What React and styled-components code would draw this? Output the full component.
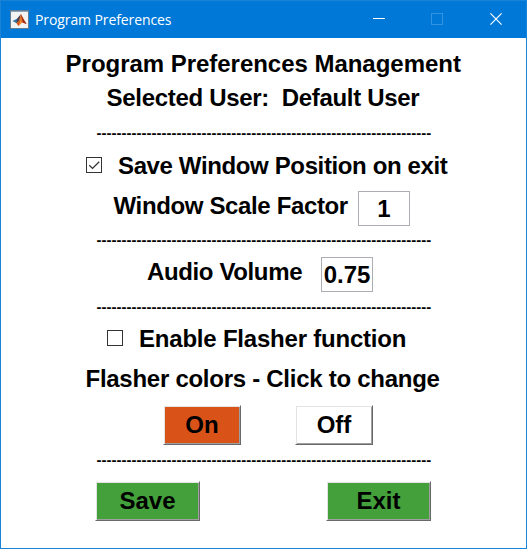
import React, { useState } from "react";
import styled, { createGlobalStyle } from "styled-components";

const GlobalStyle = createGlobalStyle`
  * { box-sizing: border-box; }
  body { margin: 0; background: #fff; overflow: hidden; }
`;

const Window = styled.div`
  width: 527px;
  height: 549px;
  display: flex;
  flex-direction: column;
  border: 1px solid #1883d7;
  background: #fff;
  color: #000;
  font: bold 24px/27px "Liberation Sans", Arial, sans-serif;
`;

const TitleBar = styled.header`
  flex: none;
  height: 37px;
  display: flex;
  align-items: center;
  padding-left: 9px;
  background: #0078d7;
  color: #fff;
`;

const Title = styled.h1`
  flex: 1;
  margin: 0 0 0 6px;
  font: 400 14px/20px "Open Sans", "Noto Sans", sans-serif;
  letter-spacing: -0.1px;
  white-space: nowrap;
`;

const WindowControl = styled.button`
  width: ${(p) => p.$width ?? 58}px;
  height: 36px;
  align-self: flex-start;
  padding: 0;
  border: 0;
  display: flex;
  align-items: center;
  justify-content: center;
  background: transparent;
`;

const Content = styled.main`
  flex: 1;
  display: flex;
  flex-direction: column;
  align-items: flex-start;
`;

const Row = styled.div`
  height: ${(p) => p.$height ?? 27}px;
  margin-top: ${(p) => p.$gap}px;
  padding-left: ${(p) => p.$indent}px;
  display: flex;
  align-items: flex-start;
`;

const Label = styled.span`
  white-space: pre;
  letter-spacing: ${(p) => p.$spacing ?? 0}px;
`;

const FieldLabel = styled(Label)`
  width: ${(p) => p.$width}px;
  padding-top: 1px;
`;

const Separator = styled.div`
  height: 17px;
  margin: ${(p) => p.$gap}px 0 0 95.5px;
  font-size: 15px;
  line-height: 17px;
  white-space: nowrap;
`;

const CheckBox = styled.button`
  width: 16px;
  height: 16px;
  margin: 5px 16px 0 0;
  padding: 0;
  border: 1px solid #333;
  display: flex;
  background: #fff;
`;

const Field = styled.input`
  width: 52px;
  height: 35px;
  padding: 1px 0 0;
  border: 1px solid #abadb3;
  border-radius: 0;
  outline: 0;
  background: #fff;
  color: #000;
  font: inherit;
  text-align: center;
`;

const PushButton = styled.button`
  width: ${(p) => p.$width}px;
  height: 40px;
  margin-right: ${(p) => p.$after ?? 0}px;
  padding: 0 0 1px;
  border: 1px solid;
  border-color: #fff #696969 #696969 #fff;
  box-shadow: inset 1px 1px #e3e3e3, inset -1px -1px #a0a0a0;
  background: ${(p) => p.$color};
  color: #000;
  font: inherit;
`;

const MatlabIcon = () => (
  <svg width="19" height="19" viewBox="0 0 19 19">
    <rect x=".5" y=".5" width="18" height="18" fill="#f3f3f3" stroke="#607d94" />
    <path d="M1 1.5h17" stroke="#8fa5b6" />
    <path d="M2.5 11 7 8.7 9 10.5 6.5 13.2Z" fill="#3877a5" />
    <path d="M7 8.7 11 4l-1.6 6.2-2.9 3Z" fill="#493e4d" />
    <path d="M11 4 9.2 10.5l-2.7 2.7 2 2.8 3.5-3.5 4.5 1.5Q14 10 11 4Z" fill="#d65418" />
    <path d="M11 4.5 10.4 11l-1.7 4.5 3-3Z" fill="#f2a039" />
    <path d="M11 4.5Q13 9 16.5 14L13 12.4Z" fill="#9e2b19" />
  </svg>
);

const Divider = ({ gap }) => <Separator $gap={gap}>{"-".repeat(67)}</Separator>;

const Check = ({ checked, onChange, label }) => (
  <CheckBox role="checkbox" aria-checked={checked} aria-label={label} onClick={() => onChange(!checked)}>
    {checked && (
      <svg width="14" height="14" viewBox="0 0 14 14" fill="none" stroke="#333" strokeWidth="1.3">
        <path d="M2.3 7.2 5.5 10.4 12.2 3.7" />
      </svg>
    )}
  </CheckBox>
);

export default function App() {
  const [savePosition, setSavePosition] = useState(true);
  const [flasher, setFlasher] = useState(false);

  return (
    <>
      <GlobalStyle />
      <Window>
        <TitleBar>
          <MatlabIcon />
          <Title>Program Preferences</Title>
          <WindowControl aria-label="Minimize">
            <svg width="12" height="12"><path d="M0 5.5h12" stroke="#fff" /></svg>
          </WindowControl>
          <WindowControl aria-label="Maximize">
            <svg width="12" height="12"><rect x=".5" y=".5" width="11" height="11" fill="none" stroke="#3393df" /></svg>
          </WindowControl>
          <WindowControl aria-label="Close" $width={60}>
            <svg width="12" height="12"><path d="m.4.4 11.2 11.2M11.6.4.4 11.6" stroke="#fff" strokeWidth="1.2" /></svg>
          </WindowControl>
        </TitleBar>
        <Content>
          <Row $gap={12} $indent={64.6}><Label $spacing={-0.03}>Program Preferences Management</Label></Row>
          <Row $gap={7} $indent={105.6}><Label $spacing={-0.31}>Selected User:  Default User</Label></Row>
          <Divider gap={13} />
          <Row $gap={11} $indent={85}>
            <Check checked={savePosition} onChange={setSavePosition} label="Save window position" />
            <Label $spacing={-0.37}>Save Window Position on exit</Label>
          </Row>
          <Row $gap={12} $height={35} $indent={112.5}>
            <FieldLabel $width={244.5} $spacing={-0.36}>Window Scale Factor</FieldLabel>
            <Field defaultValue="1" aria-label="Window scale factor" />
          </Row>
          <Divider gap={5} />
          <Row $gap={9} $height={35} $indent={146}>
            <FieldLabel $width={174} $spacing={-0.37}>Audio Volume</FieldLabel>
            <Field defaultValue="0.75" aria-label="Audio volume" />
          </Row>
          <Divider gap={6} />
          <Row $gap={10} $indent={106}>
            <Check checked={flasher} onChange={setFlasher} label="Enable flasher" />
            <Label $spacing={-0.21}>Enable Flasher function</Label>
          </Row>
          <Row $gap={13} $indent={84.5}><Label $spacing={-0.27}>Flasher colors - Click to change</Label></Row>
          <Row $gap={13} $height={40} $indent={162}>
            <PushButton $width={78} $after={54} $color="#d95319">On</PushButton>
            <PushButton $width={78} $color="#fff">Off</PushButton>
          </Row>
          <Divider gap={6} />
          <Row $gap={13} $height={40} $indent={94}>
            <PushButton $width={105} $after={126} $color="#43a03a">Save</PushButton>
            <PushButton $width={105} $color="#43a03a">Exit</PushButton>
          </Row>
        </Content>
      </Window>
    </>
  );
}
